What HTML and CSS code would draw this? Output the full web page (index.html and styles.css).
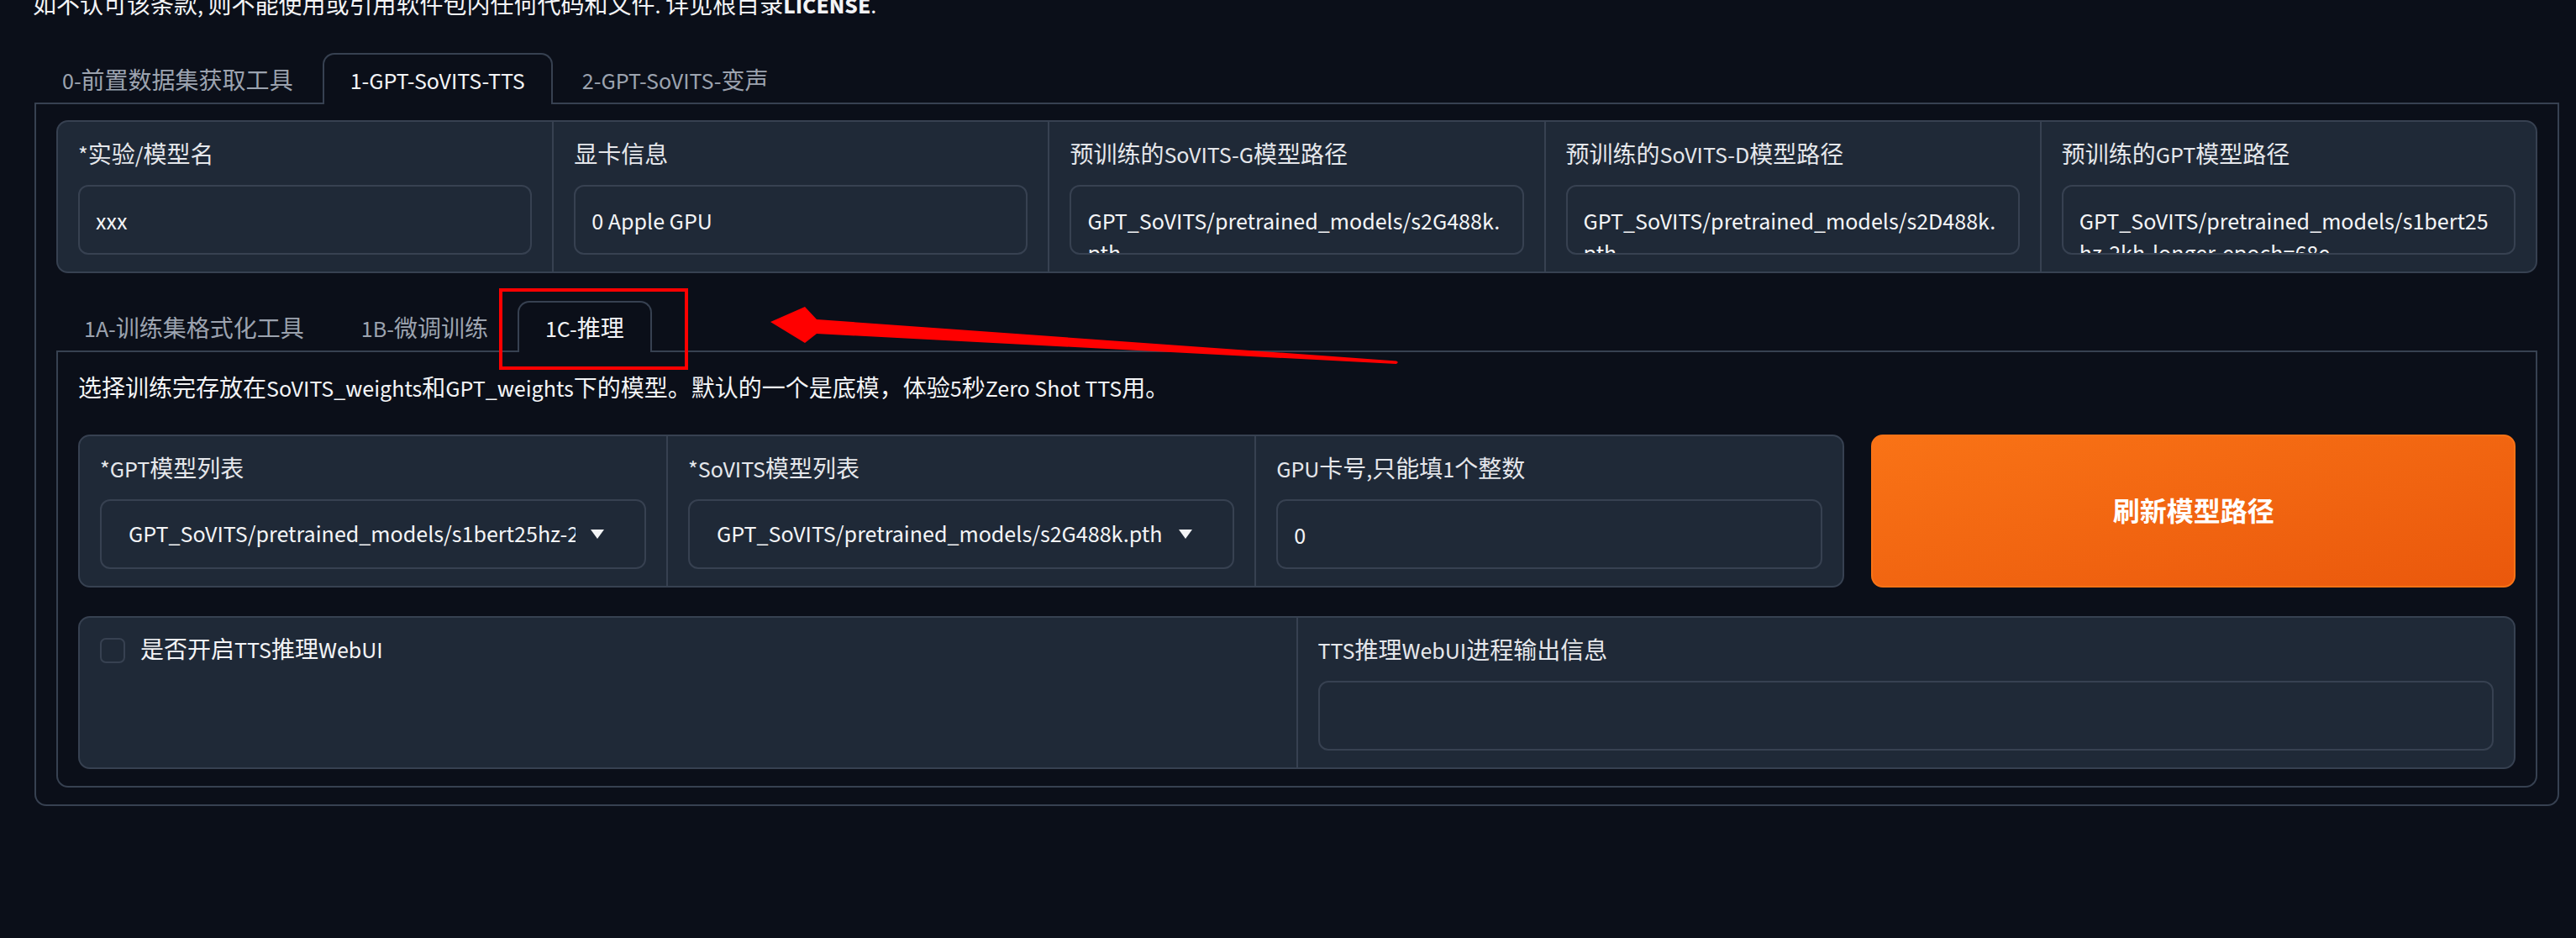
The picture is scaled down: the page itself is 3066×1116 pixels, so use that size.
FILE: index.html
```html
<!DOCTYPE html>
<html lang="zh-CN">
<head>
<meta charset="utf-8">
<title>GPT-SoVITS WebUI</title>
<link rel="stylesheet" href="styles.css">
</head>
<body>
<div class="page">
  <p class="notice">如不认可该条款, 则不能使用或引用软件包内任何代码和文件. 详见根目录<b>LICENSE</b>.</p>
  <div class="tabs outer-tabs">
    <div class="tab-nav">
      <button class="tab">0-前置数据集获取工具</button>
      <button class="tab selected">1-GPT-SoVITS-TTS</button>
      <button class="tab">2-GPT-SoVITS-变声</button>
    </div>
    <div class="tab-panel outer-panel">
      <div class="form form-5">
        <div class="field"><span class="label">*实验/模型名</span><div class="input">xxx</div></div>
        <div class="field"><span class="label">显卡信息</span><div class="input">0 Apple GPU</div></div>
        <div class="field"><span class="label">预训练的SoVITS-G模型路径</span><div class="input">GPT_SoVITS/pretrained_models/s2G488k.<br>pth</div></div>
        <div class="field"><span class="label">预训练的SoVITS-D模型路径</span><div class="input">GPT_SoVITS/pretrained_models/s2D488k.<br>pth</div></div>
        <div class="field"><span class="label">预训练的GPT模型路径</span><div class="input">GPT_SoVITS/pretrained_models/s1bert25<br>hz-2kh-longer-epoch=68e-<br>step=50232.ckpt</div></div>
      </div>
      <div class="tabs inner-tabs">
        <div class="tab-nav">
          <button class="tab">1A-训练集格式化工具</button>
          <button class="tab">1B-微调训练</button>
          <button class="tab selected">1C-推理</button>
        </div>
        <div class="tab-panel inner-panel">
          <p class="desc">选择训练完存放在SoVITS_weights和GPT_weights下的模型。默认的一个是底模，体验5秒Zero Shot TTS用。</p>
          <div class="row-2">
            <div class="form form-3">
              <div class="field"><span class="label">*GPT模型列表</span>
                <div class="dropdown"><span class="dd-value">GPT_SoVITS/pretrained_models/s1bert25hz-2kh-longer-epoch=68e-step=50232.ckpt</span><svg class="dd-arrow" viewBox="0 0 16 11"><polygon points="0,0 16,0 8,11" fill="#f3f4f6"/></svg></div>
              </div>
              <div class="field"><span class="label">*SoVITS模型列表</span>
                <div class="dropdown"><span class="dd-value">GPT_SoVITS/pretrained_models/s2G488k.pth</span><svg class="dd-arrow" viewBox="0 0 16 11"><polygon points="0,0 16,0 8,11" fill="#f3f4f6"/></svg></div>
              </div>
              <div class="field"><span class="label">GPU卡号,只能填1个整数</span><div class="input">0</div></div>
            </div>
            <button class="primary-btn">刷新模型路径</button>
          </div>
          <div class="form form-2">
            <div class="field check-field"><span class="checkbox"></span><span class="check-label">是否开启TTS推理WebUI</span></div>
            <div class="field"><span class="label">TTS推理WebUI进程输出信息</span><div class="input"></div></div>
          </div>
        </div>
      </div>
    </div>
  </div>
</div>
<svg class="annotation" width="3066" height="1116" viewBox="0 0 3066 1116">
  <rect x="596" y="345" width="221" height="93" fill="none" stroke="#ff0000" stroke-width="4"/>
  <polygon points="917,383 958,365 972,380 1662,429.5 1664,431 1662,433 972,397 958,408" fill="#ff0000"/>
</svg>
</body>
</html>
```

FILE: styles.css
```css
* { box-sizing: border-box; }

html, body {
  margin: 0;
  padding: 0;
  background: #0b0f19;
}

body {
  font-family: "Source Sans 3", "Noto Sans CJK SC", sans-serif;
  font-size: 28px;
  color: #f3f4f6;
  width: 3066px;
  height: 1116px;
  overflow: hidden;
  position: relative;
}

.page {
  padding: 0 20px 0 41px;
}

.notice {
  margin: -13px 0 0 -2px;
  line-height: 40px;
}

.notice b { font-weight: 700; }

.outer-tabs { margin-top: 36px; }
.inner-tabs { margin-top: 33px; }

.tab-nav {
  display: flex;
  gap: 2px;
  border-bottom: 2px solid #374151;
}

.tab {
  font: inherit;
  font-size: 28px;
  color: #9ca3af;
  background: transparent;
  border: 2px solid transparent;
  border-bottom: none;
  border-radius: 14px 14px 0 0;
  padding: 5px 31px 0;
  height: 61px;
  line-height: 54px;
  margin-bottom: -2px;
  white-space: nowrap;
}

.tab.selected {
  color: #f3f4f6;
  border-color: #374151;
  background: #0b0f19;
}

.tab-panel {
  border: 2px solid #374151;
  border-top: none;
  border-radius: 0 0 14px 14px;
}

.outer-panel { padding: 19px 24px 20px; }
.inner-panel { padding: 24px 24px 20px; }

.desc {
  margin: 0;
  line-height: 40px;
}

.form {
  display: grid;
  gap: 2px;
  background: #374151;
  border: 2px solid #374151;
  border-radius: 14px;
  overflow: hidden;
}

.form-5 { grid-template-columns: repeat(5, 1fr); }
.form-3 { grid-template-columns: repeat(3, 1fr); }
.form-2 { grid-template-columns: repeat(2, 1fr); margin-top: 34px; }

.field {
  background: #1f2937;
  padding: 22px 24px 20px;
  min-width: 0;
}

.label {
  display: block;
  line-height: 36px;
  margin-bottom: 17px;
  color: #e5e7eb;
  white-space: nowrap;
}

.input {
  height: 83px;
  border: 2px solid #374151;
  border-radius: 12px;
  background: #1f2937;
  padding: 23px 19px 0;
  line-height: 38px;
  overflow: hidden;
  color: #f3f4f6;
}

.row-2 {
  display: grid;
  grid-template-columns: 2103fr 767fr;
  gap: 32px;
  margin-top: 34px;
}

.dropdown {
  height: 83px;
  border: 2px solid #374151;
  border-radius: 12px;
  background: #1f2937;
  display: flex;
  align-items: center;
  gap: 18px;
  padding: 0 48px 0 32px;
}

.dd-value {
  flex: 1;
  min-width: 0;
  overflow: hidden;
  white-space: nowrap;
  line-height: 42px;
}

.dd-arrow {
  flex: none;
  width: 16px;
  height: 11px;
}

.primary-btn {
  font: inherit;
  font-size: 32px;
  font-weight: 700;
  color: #ffffff;
  background: linear-gradient(to bottom right, #f97316, #ea580c);
  border: 2px solid #f97316;
  border-radius: 14px;
}

.check-field {
  display: flex;
  align-items: flex-start;
  gap: 18px;
  padding-top: 24px;
}

.checkbox {
  width: 30px;
  height: 30px;
  border: 2px solid #374151;
  border-radius: 7px;
  background: #1f2937;
  flex: none;
}

.check-label {
  line-height: 30px;
  color: #f3f4f6;
}

.annotation {
  position: absolute;
  top: 0;
  left: 0;
  pointer-events: none;
}
```
